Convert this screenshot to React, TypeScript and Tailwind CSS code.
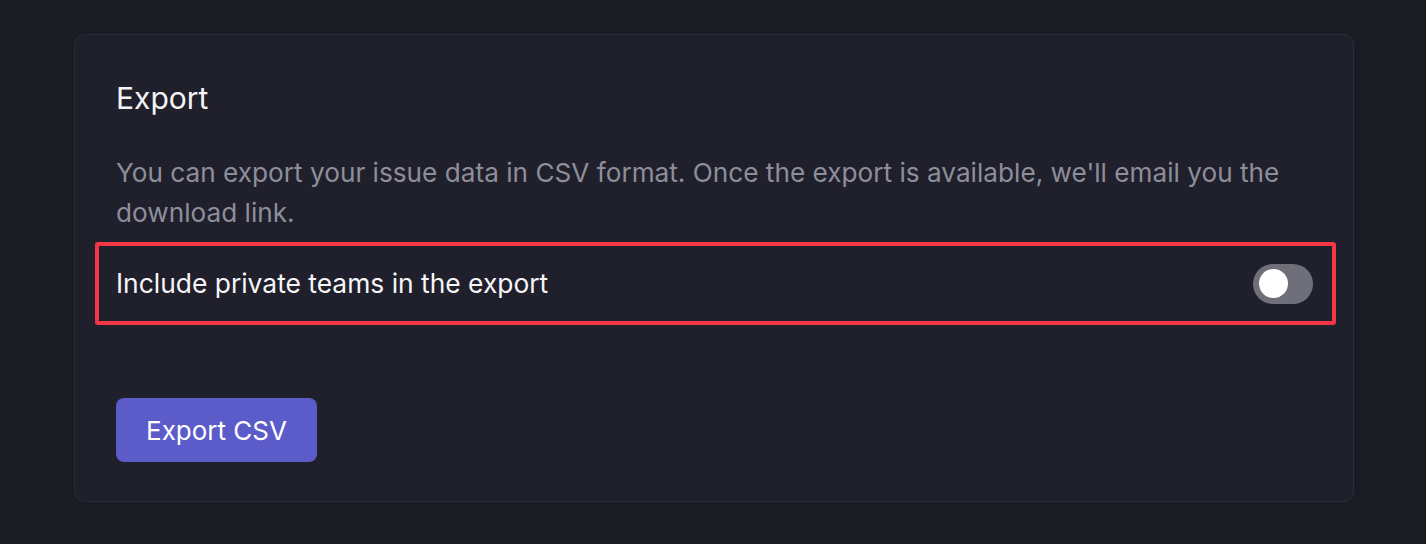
import React, { useState } from 'react';

export default function App() {
  const [includePrivate, setIncludePrivate] = useState(false);

  return (
    <div className="min-h-screen w-full bg-[#1b1b23] px-[74px] pt-[34px] font-['Inter',_'Noto_Sans',_sans-serif]">
      <div className="w-[1280px] h-[468px] rounded-[10px] border border-[#2b2c3b] bg-[#20202c] pl-[20px] pr-[17px] pt-[45px]">
        <h2 className="px-[21px] text-[30px] leading-[36px] text-[#f4f4f6] font-normal">Export</h2>
        <p className="mt-[37px] pl-[21px] pr-[40px] text-[26.2px] leading-[40px] text-[#8e8e9a]">
          You can export your issue data in CSV format. Once the export is available, we'll email you the download link.
        </p>
        <div className="mt-[9px] flex h-[83px] items-center justify-between rounded-[3px] border-4 border-[#f43646] pl-[17px] pr-[19px]">
          <span className="text-[26.4px] text-[#f6f6f8]">Include private teams in the export</span>
          <button
            onClick={() => setIncludePrivate(!includePrivate)}
            className={`flex h-[40px] w-[60px] items-center rounded-full px-[6px] ${includePrivate ? 'bg-[#5b5cc9] justify-end' : 'bg-[#6f6f7a] justify-start'}`}
          >
            <span className="h-[29px] w-[29px] rounded-full bg-white" />
          </button>
        </div>
        <button className="mt-[73px] ml-[21px] h-[64px] w-[201px] rounded-[8px] bg-[#5b5bc9] text-[26px] text-white">
          Export CSV
        </button>
      </div>
    </div>
  );
}
